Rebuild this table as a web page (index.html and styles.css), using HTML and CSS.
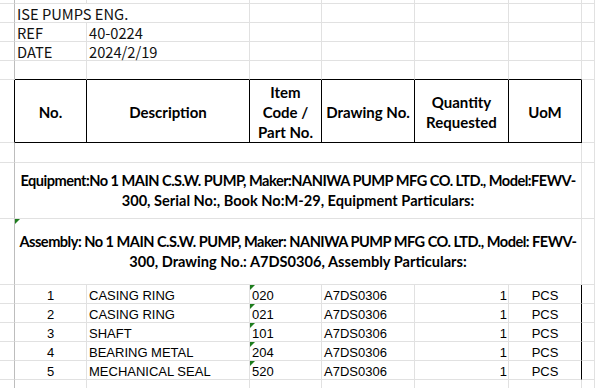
FILE: index.html
```html
<!DOCTYPE html>
<html>
<head>
<meta charset="utf-8">
<link rel="stylesheet" href="styles.css">
</head>
<body>
<div class="sheet">
  <!-- row 0 -->
  <div class="c a"></div><div class="c"></div><div class="c"></div><div class="c"></div><div class="c"></div><div class="c"></div><div class="c"></div><div class="c"></div>
  <!-- row 1 -->
  <div class="c a"></div><div class="c top span2">ISE PUMPS ENG.</div><div class="c"></div><div class="c"></div><div class="c"></div><div class="c"></div><div class="c"></div>
  <!-- row 2 -->
  <div class="c a"></div><div class="c top">REF</div><div class="c top">40-0224</div><div class="c"></div><div class="c"></div><div class="c"></div><div class="c"></div><div class="c"></div>
  <!-- row 3 -->
  <div class="c a"></div><div class="c top">DATE</div><div class="c top">2024/2/19</div><div class="c"></div><div class="c"></div><div class="c"></div><div class="c"></div><div class="c"></div>
  <!-- row 4 -->
  <div class="c a"></div><div class="c bb"></div><div class="c bb"></div><div class="c bb"></div><div class="c bb"></div><div class="c bb"></div><div class="c bb"></div><div class="c"></div>
  <!-- header row -->
  <div class="c a br"></div>
  <div class="c hd br bb">No.</div>
  <div class="c hd br bb">Description</div>
  <div class="c hd br bb">Item<br>Code /<br>Part No.</div>
  <div class="c hd br bb">Drawing No.</div>
  <div class="c hd br bb">Quantity<br>Requested</div>
  <div class="c hd br bb">UoM</div>
  <div class="c"></div>
  <!-- row 6 -->
  <div class="c a"></div><div class="c span6"></div><div class="c"></div>
  <!-- row 7 -->
  <div class="c a"></div>
  <div class="c span6 info"><span class="caps">Equipment:No 1 MAIN C.S.W. PUMP, Maker:NANIWA PUMP MFG CO. LTD., Model:FEWV-</span><span>300, Serial No:, Book No:M-29, Equipment Particulars:</span></div>
  <div class="c"></div>
  <!-- row 8 -->
  <div class="c a"></div>
  <div class="c span6 info flag"><span class="caps">Assembly: No 1 MAIN C.S.W. PUMP, Maker: NANIWA PUMP MFG CO. LTD., Model: FEWV-</span><span>300, Drawing No.: A7DS0306, Assembly Particulars:</span></div>
  <div class="c"></div>
  <!-- data rows -->
  <div class="c a"></div><div class="c d ctr">1</div><div class="c d">CASING RING</div><div class="c d flag">020</div><div class="c d">A7DS0306</div><div class="c d rt">1</div><div class="c d ctr brk">PCS</div><div class="c"></div>
  <div class="c a"></div><div class="c d ctr">2</div><div class="c d">CASING RING</div><div class="c d flag">021</div><div class="c d">A7DS0306</div><div class="c d rt">1</div><div class="c d ctr brk">PCS</div><div class="c"></div>
  <div class="c a"></div><div class="c d ctr">3</div><div class="c d">SHAFT</div><div class="c d flag">101</div><div class="c d">A7DS0306</div><div class="c d rt">1</div><div class="c d ctr brk">PCS</div><div class="c"></div>
  <div class="c a"></div><div class="c d ctr">4</div><div class="c d">BEARING METAL</div><div class="c d flag">204</div><div class="c d">A7DS0306</div><div class="c d rt">1</div><div class="c d ctr brk">PCS</div><div class="c"></div>
  <div class="c a"></div><div class="c d ctr">5</div><div class="c d">MECHANICAL SEAL</div><div class="c d flag">520</div><div class="c d">A7DS0306</div><div class="c d rt">1</div><div class="c d ctr brk">PCS</div><div class="c"></div>
  <!-- last row -->
  <div class="c a"></div><div class="c"></div><div class="c"></div><div class="c"></div><div class="c"></div><div class="c"></div><div class="c"></div><div class="c"></div>
</div>
</body>
</html>
```
FILE: styles.css
```css
html, body {
  margin: 0;
  padding: 0;
  background: #ffffff;
  overflow: hidden;
}

.sheet {
  display: grid;
  grid-template-columns: 15px 72px 163px 72px 93px 94px 73px 1fr;
  grid-template-rows: 4px 19px 19px 19px 19px 63px 20px 56px 66px 19px 19px 19px 19px 19px 20px;
  width: 595px;
  height: 388px;
  overflow: hidden;
  font-family: "Liberation Sans", Arial, sans-serif;
  font-size: 13px;
  color: #000000;
}

.c {
  box-sizing: border-box;
  border-right: 1px solid #e1e1e1;
  border-bottom: 1px solid #e1e1e1;
  position: relative;
  min-width: 0;
  white-space: nowrap;
}

.a {
  border-right-color: #bdbdbd;
}

.br {
  border-right-color: #000000;
}

.bb {
  border-bottom-color: #000000;
}

.brk {
  border-right-color: #000000;
}

.span2 {
  grid-column: span 2;
}

.span6 {
  grid-column: span 6;
}

.top {
  display: flex;
  align-items: flex-end;
  padding: 0 2px;
  font-family: "Noto Sans CJK SC", "Liberation Sans", sans-serif;
  font-size: 14.67px;
  line-height: 17px;
  color: #111111;
}

.hd {
  display: flex;
  align-items: center;
  justify-content: center;
  text-align: center;
  font-family: Lato, "Open Sans", sans-serif;
  font-weight: 700;
  font-size: 15px;
  line-height: 20px;
  padding-top: 2px;
}

.info {
  display: flex;
  flex-direction: column;
  align-items: center;
  justify-content: center;
  text-align: center;
  font-family: Lato, "Open Sans", sans-serif;
  font-weight: 700;
  font-size: 14.6px;
  line-height: 20px;
  padding-top: 1px;
}

.caps {
  letter-spacing: -0.52px;
}

.d {
  display: flex;
  align-items: flex-end;
  line-height: 15px;
  padding: 0 2px;
}

.ctr {
  justify-content: center;
}

.rt {
  justify-content: flex-end;
  padding-right: 1px;
}

.flag::before {
  content: "";
  position: absolute;
  left: 0;
  top: 0;
  width: 0;
  height: 0;
  border-top: 5px solid #1e7d1e;
  border-right: 5px solid transparent;
}
```
